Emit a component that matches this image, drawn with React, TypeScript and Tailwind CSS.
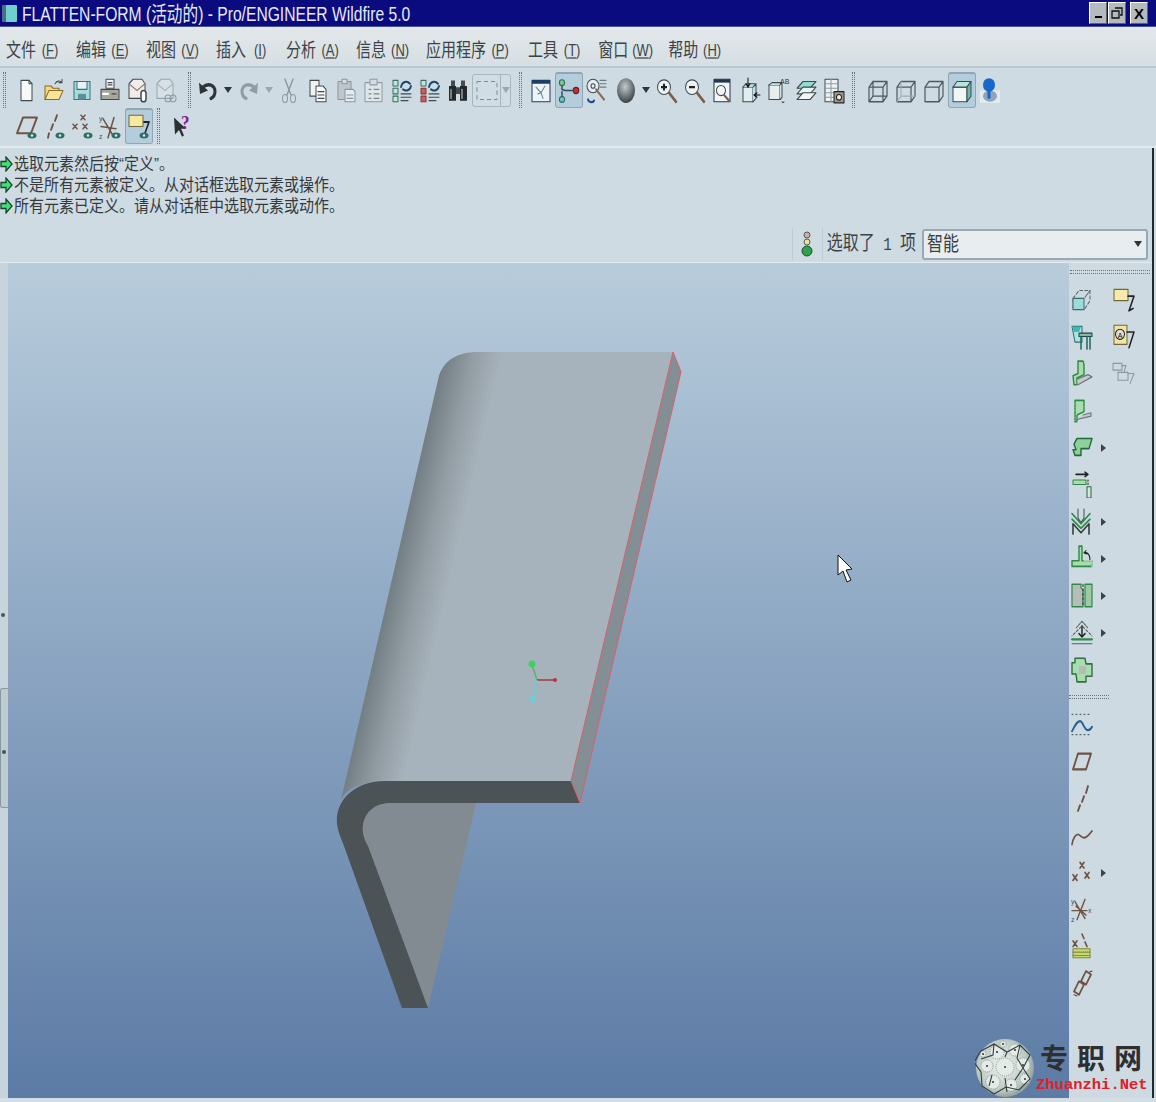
import type { ReactNode } from 'react';

const cjk = "font-['Liberation_Sans','Noto_Sans_CJK_SC',sans-serif]";

function S({ children }: { children: ReactNode }) {
  return (
    <svg width="24" height="27" viewBox="0 0 24 24" preserveAspectRatio="none" fill="none" strokeLinejoin="round" strokeLinecap="round">
      {children}
    </svg>
  );
}

const ink = '#3f4a50';
const brown = '#6e5242';
const green = '#2f8a46';
const lightGreen = '#a9dcae';

const Eye = () => (
  <g>
    <ellipse cx="17" cy="20" rx="4.5" ry="2.6" fill="#2f6f66" />
    <circle cx="17" cy="20" r="1.2" fill="#d8efe8" />
  </g>
);

const icons = {
  newFile: () => (<S><path d="M7 3h8l3 3v15H7z" fill="#f7f8f8" stroke={ink} /><path d="M15 3v3h3" stroke={ink} /></S>),
  open: () => (<S><path d="M3 20V8h6l2 2h6v2" fill="#f3d77c" stroke="#8a6b25" /><path d="M3 20l4-8h14l-4 8z" fill="#f8e59b" stroke="#8a6b25" /><path d="M13 6c2-3 5-3 7-1m0 0v-3m0 3h-3" stroke={ink} /></S>),
  save: () => (<S><path d="M4 4h16v16H4z" fill="#a6dcdc" stroke="#3d7078" /><path d="M7 4h10v7H7z" fill="#e9f2f2" stroke="#3d7078" /><path d="M8 15h8v5H8z" fill="#5f8f96" /></S>),
  print: () => (<S><path d="M8 2h8v8H8z" fill="#f4f4f4" stroke={ink} /><path d="M10 5h4M10 7h4" stroke={ink} /><path d="M3 11h18v9H3z" fill="#a8a89a" stroke={ink} /><path d="M5 15h5" stroke="#fff" strokeWidth="2" /><path d="M14 15h4" stroke={ink} /></S>),
  mail: () => (<S><path d="M3 6l4-4h9l3 4v13H3z" fill="#f1ece8" stroke={ink} /><path d="M3 6l8 6 8-6" stroke="#8d7b76" /><rect x="15" y="12" width="5" height="10" rx="2.5" fill="#fff" stroke={ink} strokeWidth="1.5" /></S>),
  mailOff: () => (<S><path d="M3 6l4-4h9l3 4v13H3z" fill="#d7e0e6" stroke="#98a6ad" /><path d="M3 6l8 6 8-6" stroke="#a9b5bb" /><circle cx="14" cy="19" r="3" stroke="#8b979d" /><circle cx="19" cy="19" r="3" stroke="#8b979d" /></S>),
  undo: () => (<S><path d="M7 9c5-4 12-2 12 4 0 3-2 5-4 6" stroke="#2d3438" strokeWidth="3" /><path d="M3 5l1 10 8-3z" fill="#2d3438" /></S>),
  redo: () => (<S><path d="M17 9c-5-4-12-2-12 4 0 3 2 5 4 6" stroke="#8f9da5" strokeWidth="3" /><path d="M21 5l-1 10-8-3z" fill="#8f9da5" /></S>),
  cut: () => (<S><path d="M8 2l6 14M16 2l-6 14" stroke="#8b979d" strokeWidth="1.4" /><ellipse cx="8" cy="19" rx="2.5" ry="3.5" stroke="#8b979d" /><ellipse cx="16" cy="19" rx="2.5" ry="3.5" stroke="#8b979d" /></S>),
  copy: () => (<S><path d="M4 3h9v14H4z" fill="#f1f3f3" stroke={ink} /><path d="M10 8h7l3 3v11H10z" fill="#f8f8f8" stroke={ink} /><path d="M12 13h6M12 16h6M12 19h6" stroke={ink} /></S>),
  paste: () => (<S><path d="M4 4h13v16H4z" fill="#bcc6cb" stroke="#89969d" /><path d="M8 2h5v4H8z" fill="#d6dde0" stroke="#89969d" /><path d="M11 11h8l2 2v9H11z" fill="#e5ebee" stroke="#89969d" /><path d="M13 16h6M13 19h6" stroke="#89969d" /></S>),
  pasteSpecial: () => (<S><path d="M3 5h17v17H3z" fill="#dfe6e9" stroke="#8d9aa1" /><path d="M8 2h7v5H8z" fill="#d6dde0" stroke="#8d9aa1" /><path d="M7 11h2M12 11h5M7 15h2M12 15h5M7 19h2M12 19h5" stroke="#7b878e" /></S>),
  regen: () => (<S><path d="M3 3h5v5H3zM3 10h5v5H3zM3 17h5v5H3z" fill="#bfe6d8" stroke="#3b6f63" /><path d="M11 9c1-5 6-6 9-3M21 8c-1 4-5 5-8 3" stroke="#17476e" strokeWidth="1.8" /><path d="M11 15h10M11 18h10M11 21h7" stroke={ink} /></S>),
  regenRed: () => (<S><path d="M3 3h5v5H3z" fill="#bfe6d8" stroke="#3b6f63" /><path d="M3 10h5v5H3zM3 17h5v5H3z" fill="#c9605f" stroke="#843936" /><path d="M11 9c1-5 6-6 9-3M21 8c-1 4-5 5-8 3" stroke="#17476e" strokeWidth="1.8" /><path d="M11 15h10M11 18h10M11 21h7" stroke={ink} /></S>),
  binoculars: () => (<S><path d="M3 8h7v13H3zM14 8h7v13h-7z" fill="#23282b" /><path d="M5 3h4v5H5zM15 3h4v5h-4zM10 9h4v6h-4z" fill="#444c50" /><path d="M5 11v8M16 11v8" stroke="#cfd7db" /></S>),
  frame: () => (<S><path d="M2 4h20v16H2z" stroke="#7e8b92" strokeDasharray="4 3" strokeLinecap="butt" /></S>),
  tree: () => (<S><path d="M3 3h18v19H3z" fill="#eef3f8" stroke="#1d3c68" /><path d="M3 3h18v3H3z" fill="#1d3c68" /><path d="M7 9l5 5 2 5M16 8l-4 6M9 15l3-1" stroke="#5f7f95" /></S>),
  datum: () => (<S><circle cx="5" cy="5" r="2.6" fill="#7fc596" stroke="#2f6f4a" /><circle cx="19" cy="12" r="2.8" fill="#b9323f" stroke="#6d1a22" /><circle cx="5" cy="20" r="2.6" fill="#6fc4bd" stroke="#2b6f6a" /><path d="M5 8v3l3 1h8M5 17v-4" stroke="#33464e" strokeWidth="1.4" /></S>),
  spin: () => (<S><circle cx="8" cy="8" r="6" fill="#e6ecee" stroke={ink} /><circle cx="8" cy="8" r="2" stroke={ink} /><path d="M15 3h6M15 6h6M15 9h6" stroke="#6c7a80" /><path d="M11 11l8 9" stroke="#8a6b55" strokeWidth="2" /><path d="M3 20c1 3 5 3 6 1" stroke="#204f93" strokeWidth="2" /></S>),
  sphere: () => (<S><defs><radialGradient id="sph" cx="0.45" cy="0.35" r="0.75"><stop offset="0" stopColor="#c4c9cc" /><stop offset="0.65" stopColor="#5d6468" /><stop offset="1" stopColor="#2a2e31" /></radialGradient></defs><ellipse cx="12" cy="12" rx="9" ry="11" fill="url(#sph)" /></S>),
  zoomIn: () => (<S><circle cx="10" cy="9" r="6.5" fill="#eef2f3" stroke={ink} /><path d="M15 14l7 8" stroke="#7b5e4c" strokeWidth="2.4" /><path d="M7 9h6M10 6v6" stroke="#1f2426" strokeWidth="2" strokeLinecap="butt" /></S>),
  zoomOut: () => (<S><circle cx="10" cy="9" r="6.5" fill="#eef2f3" stroke={ink} /><path d="M15 14l7 8" stroke="#7b5e4c" strokeWidth="2.4" /><path d="M7 9h6" stroke="#1f2426" strokeWidth="2" strokeLinecap="butt" /></S>),
  refit: () => (<S><path d="M4 2h16v20H4z" fill="#f2f6f8" stroke="#24364f" /><path d="M4 2h16v3H4z" fill="#24364f" /><circle cx="11" cy="12" r="4.5" stroke={ink} /><path d="M14 16l5 5" stroke="#7b5e4c" strokeWidth="2" /></S>),
  reorient: () => (<S><path d="M5 9h10v13H5z" fill="#dfeeee" stroke={ink} /><path d="M5 9l3-3h10l-3 3M15 9l3-3v13l-3 3" fill="#bfe2e2" stroke={ink} /><path d="M10 1v8m-2-3l2 3 2-3" stroke="#111" /><path d="M22 16h-6m3-2l-3 2 3 2" stroke="#111" /></S>),
  views: () => (<S><path d="M3 7h11v13H3z" fill="#e8eeee" stroke={ink} /><path d="M3 7l3-2h10l-2 2M14 7l2-2v13l-2 2" fill="#cfe2e2" stroke={ink} /><path d="M15 22l2 1 2-1z" fill="#111" /><text x="14" y="6" fontSize="7" fill="#333" fontFamily="Liberation Sans">AB</text></S>),
  layers: () => (<S><path d="M3 10l6-6h13l-6 6z" fill="#8fdcd0" stroke={ink} /><path d="M3 15l6-6h13l-6 6z" fill="#e9f4f1" stroke={ink} /><path d="M3 20l6-6h13l-6 6z" fill="#f4f6f6" stroke={ink} /></S>),
  viewMgr: () => (<S><path d="M3 2h13v20H3z" fill="#f0f3f3" stroke={ink} /><path d="M3 6h13M3 10h13M3 14h13M3 18h13M9 2v20" stroke="#8c989e" /><path d="M12 13h10v10H12z" fill="#9b9a8a" stroke="#222" /><circle cx="17" cy="18" r="2.5" fill="#eee" stroke="#222" /></S>),
  wire: () => (<S><path d="M3 9h14v13H3zM7 4h14v13H7zM3 9l4-5M17 9l4-5M3 22l4-5M17 22l4-5" stroke="#4e595e" strokeWidth="1.2" /></S>),
  hidden: () => (<S><path d="M3 9h14v13H3zM3 9l4-5h14l-4 5M17 9l4-5v13l-4 5" stroke="#4e595e" strokeWidth="1.2" /><path d="M7 4v13h14M3 22l4-5" stroke="#9faab0" strokeWidth="1" /></S>),
  noHidden: () => (<S><path d="M3 9h14v13H3zM3 9l4-5h14l-4 5M17 9l4-5v13l-4 5" stroke="#4e595e" strokeWidth="1.2" /></S>),
  shaded: () => (<S><path d="M3 9h14v13H3z" fill="#eef5f4" stroke="#3d4a4f" /><path d="M3 9l4-5h14l-4 5z" fill="#b8e6da" stroke="#3d4a4f" /><path d="M17 9l4-5v13l-4 5z" fill="#71b8a8" stroke="#3d4a4f" /></S>),
  scene: () => (<S><path d="M2 12h20v11H2z" fill="#e4ebef" /><ellipse cx="12" cy="17" rx="7" ry="5" fill="#8fa3bd" /><circle cx="11" cy="7" r="6" fill="#1568c9" /><path d="M11 13v5" stroke="#1568c9" strokeWidth="3" /></S>),
  plane: () => (<S><path d="M8 4h14l-6 14H2z" stroke={brown} strokeWidth="1.8" /><Eye /></S>),
  axis: () => (<S><path d="M14 2l-2 5M10 10l-2 5M6 18l-1 4" stroke={brown} strokeWidth="1.8" /><Eye /></S>),
  points: () => (<S><path d="M10 2l4 4m0-4l-4 4M2 10l4 4m0-4l-4 4M12 10l4 4m0-4l-4 4" stroke={brown} strokeWidth="1.5" /><Eye /></S>),
  csys: () => (<S><path d="M2 12l15 2M15 4L9 22M4 5l10 15" stroke={brown} strokeWidth="1.5" /><text x="0" y="7" fontSize="7" fill="#45525a" fontFamily="Liberation Sans">y</text><text x="0" y="23" fontSize="7" fill="#45525a" fontFamily="Liberation Sans">z</text><Eye /></S>),
  note: () => (<S><path d="M2 2h14v10H2z" fill="#f7e8a0" stroke="#6d6a38" /><path d="M17 8h5l-4 10" stroke="#222" strokeWidth="1.6" /><Eye /></S>),
  help: () => (<S><path d="M5 4l1 15 4-4 3 6 2-1-3-6h5z" fill="#2a3134" /><text x="12" y="14" fontSize="17" fontWeight="700" fill="#7d1f86" fontFamily="Liberation Serif">?</text></S>),
  draft: () => (<S><path d="M3 11l6-7h11v9l-5 7H3z" stroke="#59666c" strokeDasharray="3 2" /><path d="M20 4l-5 6" stroke="#59666c" /><path d="M3 11h11v10H3z" fill="#9cdadb" stroke="#3d6a70" /></S>),
  noteDim: () => (<S><path d="M2 3h14v10H2z" fill="#f7e8ab" stroke="#6d6a38" /><path d="M16 9h6l-5 13m0 0l4-2" stroke="#222" strokeWidth="1.5" /></S>),
  noteA: () => (<S><path d="M2 2h13v17H2z" fill="#f2e4a6" stroke="#6d6a38" /><circle cx="8" cy="10" r="4.5" fill="#ddd" stroke="#222" /><text x="5.7" y="13" fontSize="7" fill="#111" fontFamily="Liberation Sans">A</text><path d="M15 8h7l-5 14" stroke="#222" strokeWidth="1.5" /></S>),
  noteOff: () => (<S><path d="M1 3h9v6H1zM6 11h10v7H6z" stroke="#8b979d" /><path d="M10 5h4l-2 6M16 12h6l-4 9" stroke="#8b979d" /></S>),
  wall: () => (<S><path d="M2 3h10v14H5z" fill="#a8e4e6" stroke="#2c6f73" /><path d="M2 3h9l-2 5H4z" fill="#3fb7b4" /><path d="M9 9h13v3H9z" fill="#8db7a4" stroke="#24453d" /><path d="M11 12v11M17 12v11M20 12v11" stroke="#1a6a60" strokeWidth="1.5" /></S>),
  flange: () => (<S><path d="M8 1h5l1 3v9l-7 3v6H4l-1-8 5-2z" fill={lightGreen} stroke={green} strokeWidth="1.4" /><path d="M8 22l14-7-4-2-11 4" fill="#c3ccca" stroke="#68757a" /></S>),
  flat: () => (<S><path d="M5 3h9v10l-7 3v6H5z" fill={lightGreen} stroke={green} strokeWidth="1.4" strokeDasharray="2 1" /><path d="M7 20l14-3v-3l-8 2" fill="#c3ccca" stroke="#68757a" /></S>),
  bend: () => (<S><path d="M4 9l3-5h15l-3 9h-8v6H5l-2-5h3z" fill="#8dd29d" stroke="#24683c" strokeWidth="1.4" /></S>),
  extend: () => (<S><path d="M6 3h12m-3-2l3 2-3 2" stroke="#222" strokeWidth="1.4" /><path d="M3 8h13v4H3z" fill={lightGreen} stroke={green} /><path d="M18 8v5" stroke="#222" strokeDasharray="1 2" /><path d="M17 14h4v10h-4z" fill="#d5e7da" stroke="#24683c" /></S>),
  form: () => (<S><path d="M8 1v8M14 1v8M8 9l3 4 3-4" stroke="#3e4a4e" /><path d="M2 5l9 9 9-9M2 10l9 8 9-8" stroke="#2f8a46" strokeWidth="1.5" /><path d="M3 23V14l8 8 8-8v9" stroke="#2d3436" strokeWidth="1.5" /></S>),
  unbend: () => (<S><path d="M9 1h3v13h10v5H2v-5h7z" fill={lightGreen} stroke={green} strokeWidth="1.4" /><path d="M14 7c3-1 6 1 6 6M14 7l2-2m-2 2l3 1" stroke="#222" /><path d="M14 14h8v5" stroke="#eee" strokeDasharray="2 1" /></S>),
  rip: () => (<S><path d="M2 2h9v3l2 2v15H2z" fill="#b7bcb9" stroke={green} strokeWidth="1.2" /><path d="M15 2h7v20h-7z" fill="#9dc9a5" stroke={green} strokeWidth="1.2" /><path d="M13 2v20" stroke="#334" strokeDasharray="2 2" /></S>),
  deform: () => (<S><path d="M11 7L2 15M13 7l9 8" stroke="#47584d" strokeDasharray="2 2" /><path d="M12 2L6 8M12 2l6 6" stroke="#5b6a60" strokeDasharray="2 1" /><path d="M12 6v10m-3-3l3 3 3-3" stroke="#222" strokeWidth="1.4" /><path d="M2 18h20" stroke="#2f8a46" strokeWidth="2" /><path d="M2 22h20" stroke="#4f5f66" /></S>),
  corner: () => (<S><path d="M5 2h10l1 5h6v11h-6v5H7l-1-7H2V6h3z" fill={lightGreen} stroke="#2b7240" strokeWidth="1.4" /><path d="M9 9h7v7H9z" fill="#b6bbb9" /></S>),
  sketch: () => (<S><path d="M2 3h20M2 21h20" stroke="#56646a" strokeDasharray="1 3" /><path d="M2 18c3-5 5-9 8-9s4 8 8 8c2 0 3-1 4-3" stroke="#276092" strokeWidth="1.8" /></S>),
  datumPlane: () => (<S><path d="M8 5h13l-5 14H3z" stroke={brown} strokeWidth="1.8" /></S>),
  datumAxis: () => (<S><path d="M18 1l-2 6M14 10l-2 5M10 18l-2 5" stroke={brown} strokeWidth="1.8" /></S>),
  curve: () => (<S><path d="M2 20c1-6 4-9 6-9s3 3 6 3 5-3 8-6" stroke={brown} strokeWidth="1.6" /></S>),
  pts: () => (<S><path d="M10 3l4 5m0-5l-4 5M3 14l4 5m0-5l-4 5M15 12l4 5m0-5l-4 5" stroke={brown} strokeWidth="1.6" /></S>),
  coord: () => (<S><path d="M2 13h15M15 3L7 21M5 5l10 15M6 9l10 8" stroke={brown} strokeWidth="1.3" /><text x="1" y="7" fontSize="7" fill="#45525a" fontFamily="Liberation Sans">y</text><text x="1" y="23" fontSize="7" fill="#45525a" fontFamily="Liberation Sans">z</text><text x="18" y="15" fontSize="7" fill="#45525a" fontFamily="Liberation Sans">x</text></S>),
  offsetPts: () => (<S><path d="M3 7l4 5m0-5l-4 5M12 1l2 4M15 8l2 4" stroke={brown} strokeWidth="1.5" /><path d="M3 14h17v8H3z" fill="#c9d76d" stroke="#7b8840" /><path d="M3 17h17M3 20h17" stroke="#788448" strokeDasharray="1 1" /></S>),
  chain: () => (<S><path d="M16 1l5 3-5 9-5-3zM9 10l5 3-5 9-5-3z" stroke={brown} strokeWidth="1.7" /><path d="M7 23l-3-1M19 2l3-1" stroke={brown} /></S>),
};

const Drop = ({ dim }: { dim?: boolean }) => (
  <svg width="8" height="6" viewBox="0 0 8 6"><path d="M0 0h8L4 6z" fill={dim ? '#9aa7ae' : '#2f363a'} /></svg>
);

const Fly = () => (
  <svg width="5" height="8" viewBox="0 0 5 8"><path d="M0 0l5 4-5 4z" fill="#3a4349" /></svg>
);

function Grip() {
  return <div className="mx-[3px] h-[36px] w-[3px] border-x border-dotted border-[#68757c]" />;
}

function Btn({ icon, active }: { icon: keyof typeof icons; active?: boolean }) {
  const Icon = icons[icon];
  return (
    <div
      className={
        'flex h-[36px] w-[28px] items-center justify-center rounded-[3px] ' +
        (active ? 'border border-t-2 border-[#8fa6b4] bg-[#b4cddd]' : '')
      }
    >
      <Icon />
    </div>
  );
}

const menu: [string, string][] = [
  ['文件', 'F'],
  ['编辑', 'E'],
  ['视图', 'V'],
  ['插入', 'I'],
  ['分析', 'A'],
  ['信息', 'N'],
  ['应用程序', 'P'],
  ['工具', 'T'],
  ['窗口', 'W'],
  ['帮助', 'H'],
];

const messages = [
  '选取元素然后按“定义”。',
  '不是所有元素被定义。从对话框选取元素或操作。',
  '所有元素已定义。请从对话框中选取元素或动作。',
];

const sideTop: [keyof typeof icons, boolean, (keyof typeof icons)?][] = [
  ['draft', false, 'noteDim'],
  ['wall', false, 'noteA'],
  ['flange', false, 'noteOff'],
  ['flat', false],
  ['bend', true],
  ['extend', false],
  ['form', true],
  ['unbend', true],
  ['rip', true],
  ['deform', true],
  ['corner', false],
];

const sideBottom: [keyof typeof icons, boolean][] = [
  ['sketch', false],
  ['datumPlane', false],
  ['datumAxis', false],
  ['curve', false],
  ['pts', true],
  ['coord', false],
  ['offsetPts', false],
  ['chain', false],
];

function SideRow({ icon, fly, right }: { icon: keyof typeof icons; fly: boolean; right?: keyof typeof icons }) {
  const Icon = icons[icon];
  const Right = right ? icons[right] : null;
  return (
    <div className="flex h-[37px] items-center">
      <div className="flex w-[26px] justify-center"><Icon /></div>
      <div className="flex w-[16px] justify-center">{fly && <Fly />}</div>
      <div className="flex w-[26px] justify-center">{Right && <Right />}</div>
    </div>
  );
}

function Ball() {
  const gears = [
    [22, 14, 7], [40, 12, 6], [12, 28, 6], [30, 29, 9], [48, 27, 7],
    [18, 44, 7], [36, 47, 6], [50, 41, 5], [28, 6, 3], [8, 16, 3],
  ];
  return (
    <svg width="60" height="60" viewBox="0 0 60 60">
      <defs>
        <radialGradient id="ball" cx="0.45" cy="0.45" r="0.6">
          <stop offset="0" stopColor="#f0f4f0" />
          <stop offset="0.75" stopColor="#b9c7c2" />
          <stop offset="1" stopColor="#7f918f" />
        </radialGradient>
      </defs>
      <circle cx="30" cy="30" r="29" fill="url(#ball)" />
      {gears.map(([x, y, r]) => (
        <g key={`${x}-${y}`}>
          <circle cx={x} cy={y} r={r} fill="#e4eae6" stroke="#8b9b98" strokeWidth="1" strokeDasharray="1 1" />
          <circle cx={x} cy={y} r="1" fill="#2d3735" />
        </g>
      ))}
      <path d="M6 13l13-7 13 8 13-7 10 10-7 13 7 11-11 11-13-3-12 7-12-8-1-14-7-10zM19 6l-1 11-12 4M32 14l-2 5M45 7l-3 13M42 20l6 10M30 40l2 14M17 37l-3 11M48 30l-8 12" stroke="#333d3c" strokeWidth="1.1" fill="none" />
    </svg>
  );
}

function Viewport() {
  return (
    <svg className="absolute inset-0" width="1061" height="835" viewBox="8 263 1061 835">
      <defs>
        <linearGradient id="bend" gradientUnits="userSpaceOnUse" x1="389" y1="590" x2="445" y2="603">
          <stop offset="0" stopColor="#737d84" />
          <stop offset="0.5" stopColor="#929ca3" />
          <stop offset="1" stopColor="#a7b3bc" />
        </linearGradient>
      </defs>
      <path d="M385 781C360 781 345 790 341 800L438 380C442 360 458 352 478 352H673L571 781z" fill="url(#bend)" />
      <path d="M673 352L681 372L580 803L571 781z" fill="#848e95" />
      <path d="M476 803H370L352 835L380 930L428 1008z" fill="#838b92" />
      <path d="M571 781H385C355 781 335 800 337 824C338 832 341 838 344 846L402 1008H428L368 846C363 838 362 830 363 825C365 812 375 803 390 803H580z" fill="#4b5357" />
      <path d="M673 352L571 781L580 803M673 352L681 372L580 803" fill="none" stroke="#d8606a" strokeWidth="1" />
      <path d="M537 680L532 665" stroke="#5fb06e" strokeWidth="1.5" />
      <circle cx="532" cy="664" r="3.5" fill="#3ed160" />
      <path d="M537 680H555" stroke="#a83a3e" strokeWidth="1.5" />
      <circle cx="555" cy="680" r="2" fill="#b53337" />
      <path d="M537 680L533 698" stroke="#66cdd4" strokeWidth="1.5" />
      <circle cx="533" cy="699" r="3" fill="#63d2da" />
      <path d="M838 555V575L843 571L847 582L851 580L846 570L852 569z" fill="#fff" stroke="#111" strokeWidth="1" />
    </svg>
  );
}

const winBtn =
  'flex h-[22px] w-[18px] items-center justify-center border border-b-[#5c6468] border-l-white border-r-[#5c6468] border-t-white bg-[#b3bbbf] text-[15px] font-bold leading-none text-black';

export default function App() {
  return (
    <div className={`relative flex h-[1102px] w-[1156px] flex-col overflow-hidden bg-[#cfdbe3] ${cjk}`}>
      {/* title bar */}
      <div className="flex h-[27px] shrink-0 items-center justify-between border-b border-[#4a5490] bg-[#0b0b80] pr-[8px]">
        <div className="flex items-center">
          <div className="ml-[2px] h-[17px] w-[15px] rounded-[1px] border-l-4 border-[#4d6f86] bg-[#6fd0cf]" />
          <span className="ml-[5px] origin-left scale-x-[0.745] whitespace-nowrap text-[21px] leading-none text-[#e7e9f2]">
            FLATTEN-FORM (活动的) - Pro/ENGINEER Wildfire 5.0
          </span>
        </div>
        <div className="flex gap-[1px]">
          <div className={winBtn}><span className="mt-[8px] block h-[2px] w-[7px] bg-black" /></div>
          <div className={winBtn}>
            <svg width="12" height="12" viewBox="0 0 12 12" fill="none" stroke="#111" strokeWidth="1.3"><path d="M4 1h7v7H9M1 4h7v7H1z" /></svg>
          </div>
          <div className={winBtn + ' ml-[3px]'}>X</div>
        </div>
      </div>

      {/* menu */}
      <div className="flex h-[41px] shrink-0 items-center gap-[16px] border-b-2 border-[#bcc8cf] bg-gradient-to-b from-[#e3e8ea] to-[#d6dfe4] pl-[6px] pt-[8px]">
        {menu.map(([label, key]) => (
          <span
            key={key}
            className={
              'flex scale-y-[1.25] items-center whitespace-nowrap text-[15px] leading-none text-[#3c4347] ' +
              (key === 'P' ? 'mr-[2px]' : '')
            }
          >
            {label}
            <span className="ml-[4px] inline-block w-[20px] text-center text-[13px]">
              (<span className="underline">{key}</span>)
            </span>
          </span>
        ))}
      </div>

      {/* toolbars */}
      <div className="flex h-[80px] shrink-0 flex-col border-b-2 border-[#e2e9ed] bg-[#cfdbe3] pt-[4px]">
        <div className="flex h-[36px] items-center">
          <Grip />
          <div className="ml-[3px] flex w-[168px]">
            {(['newFile', 'open', 'save', 'print', 'mail', 'mailOff'] as const).map((i) => <Btn key={i} icon={i} />)}
          </div>
          <div className="ml-[5px]"><Grip /></div>
          <Btn icon="undo" />
          <div className="flex w-[12px] justify-center"><Drop /></div>
          <div className="ml-[1px]"><Btn icon="redo" /></div>
          <div className="flex w-[12px] justify-center"><Drop dim /></div>
          <Btn icon="cut" />
          <div className="ml-[1px] flex">
            {(['copy', 'paste', 'pasteSpecial', 'regen', 'regenRed', 'binoculars'] as const).map((i) => <Btn key={i} icon={i} />)}
          </div>
          <div className="flex h-[33px] w-[39px] items-center rounded-[3px] border border-[#a7b5bd] bg-[#d1dde4]">
            <div className="flex w-[27px] justify-center"><Btn icon="frame" /></div>
            <div className="flex h-full flex-1 items-center justify-center border-l border-[#a7b5bd]"><Drop dim /></div>
          </div>
          <div className="ml-[5px]"><Grip /></div>
          <div className="ml-[2px] flex">
            <Btn icon="tree" />
            <Btn icon="datum" active />
            <Btn icon="spin" />
          </div>
          <div className="ml-[1px]"><Btn icon="sphere" /></div>
          <div className="flex w-[12px] justify-center"><Drop /></div>
          {(['zoomIn', 'zoomOut', 'refit', 'reorient', 'views', 'layers', 'viewMgr'] as const).map((i) => <Btn key={i} icon={i} />)}
          <div className="ml-[1px]"><Grip /></div>
          <div className="ml-[6px] flex">
            <Btn icon="wire" />
            <Btn icon="hidden" />
            <Btn icon="noHidden" />
            <Btn icon="shaded" active />
            <Btn icon="scene" />
          </div>
        </div>
        <div className="flex h-[36px] items-center">
          <div className="ml-[13px] flex">
            {(['plane', 'axis', 'points', 'csys'] as const).map((i) => <Btn key={i} icon={i} />)}
            <Btn icon="note" active />
          </div>
          <div className="ml-[1px]"><Grip /></div>
          <div className="ml-[4px]"><Btn icon="help" /></div>
        </div>
      </div>

      {/* lower part, black line runs down its right side */}
      <div className="mr-[2px] flex min-h-0 flex-1 flex-col border-r-2 border-[#23282b]">
        {/* message log */}
        <div className="h-[78px] shrink-0 pt-[5px]">
          {messages.map((m) => (
            <div key={m} className="flex h-[21px] items-center">
              <svg className="mr-[1px] shrink-0" width="13" height="16" viewBox="0 0 13 16">
                <path d="M1 5.5h5V1l6 7-6 7V10.500H1z" fill="#3fe078" stroke="#17462a" strokeWidth="1.3" />
              </svg>
              <span className="scale-y-[1.1] whitespace-nowrap text-[15px] leading-none text-[#33393d]">{m}</span>
            </div>
          ))}
        </div>

        {/* status row */}
        <div className="flex h-[37px] shrink-0 items-center justify-end border-b border-[#e4ebef] pr-[4px]">
          <div className="flex h-[32px] w-[31px] items-center justify-center border-x border-[#bdcad2]">
            <svg width="12" height="28" viewBox="0 0 12 28">
              <circle cx="6" cy="5" r="3" fill="#c9b0a4" stroke="#5e5a55" />
              <circle cx="6" cy="12" r="3" fill="#e8e2a0" stroke="#5e5a55" />
              <circle cx="6" cy="21" r="5" fill="#2fa24c" stroke="#1c4f2e" />
            </svg>
          </div>
          <span className="ml-[4px] mr-[6px] scale-y-[1.25] whitespace-pre text-[16px] leading-none text-[#3b4347]">
            选取了<span className="font-['Liberation_Mono'] text-[14px]"> 1 </span>项
          </span>
          <div className="flex h-[31px] w-[226px] items-center justify-between rounded-[3px] border-2 border-[#98a9b3] bg-[#e8edf0] pl-[3px] pr-[4px]">
            <span className="scale-y-[1.3] text-[16px] leading-none text-[#3a4144]">智能</span>
            <Drop />
          </div>
        </div>

        {/* main area */}
        <div className="flex min-h-0 flex-1">
          {/* left sash */}
          <div className="relative w-[8px] shrink-0 bg-[#c8d4dc]">
            <div className="absolute left-[1px] top-[350px] h-[4px] w-[4px] rounded-full bg-[#4a5358]" />
            <div className="absolute left-0 top-[425px] h-[120px] w-[8px] rounded-l-[3px] border-y border-l border-[#8b999f] bg-[#bdcbd3]" />
            <div className="absolute left-[2px] top-[487px] h-[4px] w-[4px] rounded-full bg-[#4a5358]" />
          </div>

          {/* graphics area */}
          <div className="relative min-w-0 flex-1 bg-gradient-to-b from-[#b8ccdb] to-[#5c7ba5]">
            <Viewport />
          </div>

          {/* right toolbar */}
          <div className="flex w-[83px] shrink-0 flex-col bg-[#cddae2]">
            <div className="flex h-[18px] items-center pl-[1px]">
              <div className="h-[4px] w-[80px] border-y border-dotted border-[#68757c]" />
            </div>
            {sideTop.map(([icon, fly, right]) => (
              <SideRow key={icon} icon={icon} fly={fly} right={right} />
            ))}
            <div className="flex h-[18px] items-center">
              <div className="h-[4px] w-[40px] border-y border-dotted border-[#68757c]" />
            </div>
            {sideBottom.map(([icon, fly]) => (
              <SideRow key={icon} icon={icon} fly={fly} />
            ))}
          </div>
        </div>
      </div>

      {/* bottom edge */}
      <div className="h-[4px] shrink-0 bg-[#d3dde3]" />

      {/* site watermark */}
      <div className="absolute left-[975px] top-[1038px] flex">
        <Ball />
        <div className="relative h-[60px] w-[120px]">
          <span className="absolute left-[5px] top-[6px] whitespace-nowrap text-[28px] font-bold leading-[32px] tracking-[9px] text-[#2d2f31]">
            专职网
          </span>
          <span className="absolute left-[1px] top-[38px] whitespace-nowrap font-['Liberation_Mono'] text-[15.5px] font-bold leading-[18px] text-[#e02028]">
            Zhuanzhi.Net
          </span>
        </div>
      </div>
    </div>
  );
}
